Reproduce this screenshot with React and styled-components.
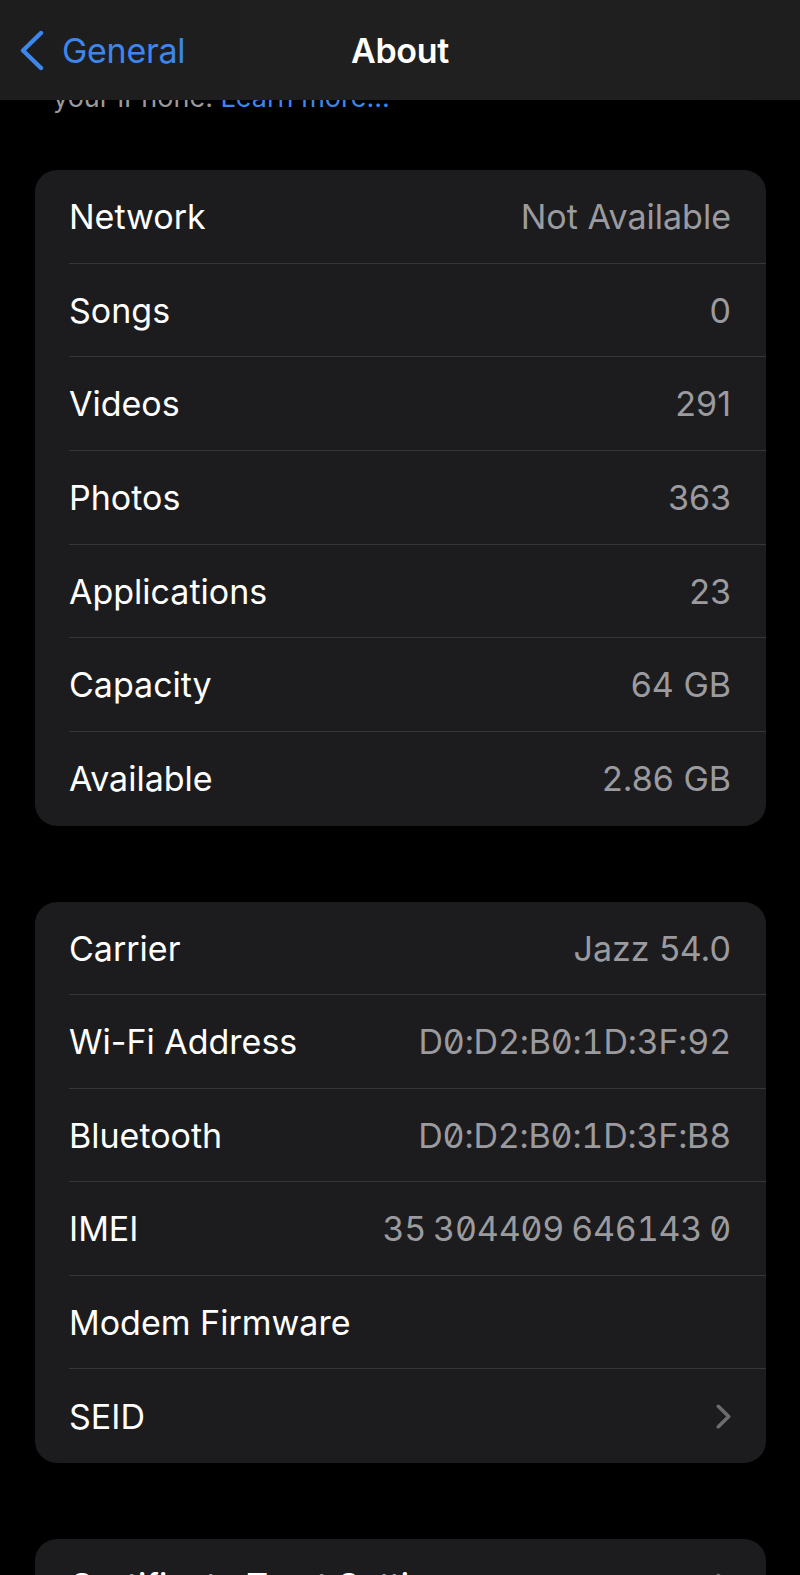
import React from 'react';
import styled, { createGlobalStyle } from 'styled-components';

const GlobalStyle = createGlobalStyle`
  html, body {
    margin: 0;
    padding: 0;
    background: #000;
  }
  body {
    font-family: Inter, "Noto Sans", "Liberation Sans", sans-serif;
    -webkit-font-smoothing: antialiased;
  }
`;

const Page = styled.div`
  position: relative;
  width: 800px;
  height: 1575px;
  overflow: hidden;
  background: #000;
`;

const NavBar = styled.header`
  position: absolute;
  top: 0;
  left: 0;
  right: 0;
  height: 100px;
  z-index: 2;
  display: grid;
  grid-template-columns: 1fr auto 1fr;
  align-items: center;
  background: linear-gradient(90deg, #1d1d1d 0%, #202020 60%, #1e1e1e 100%);
`;

const BackButton = styled.div`
  display: flex;
  align-items: center;
  gap: 18px;
  padding-left: 19px;
  color: #3d86ec;
  font-size: 34px;
  letter-spacing: -0.3px;
`;

const Title = styled.h1`
  margin: 0;
  color: #fff;
  font-size: 34px;
  font-weight: 600;
  letter-spacing: -0.3px;
`;

const Content = styled.main`
  padding: 82px 34px 0 35px;
  display: flex;
  flex-direction: column;
  gap: 76px;
`;

const Note = styled.p`
  margin: 0 0 -20px 18px;
  font-size: 27px;
  line-height: 32px;
  color: #9a9a9e;
`;

const NoteLink = styled.span`
  color: #3d86ec;
`;

const Card = styled.section`
  background: #1c1c1e;
  border-radius: 22px;
  overflow: hidden;
`;

const Row = styled.div`
  padding-left: 34px;
`;

const RowInner = styled.div`
  box-sizing: border-box;
  height: ${p => p.$h}px;
  display: flex;
  align-items: center;
  justify-content: space-between;
  padding-right: 35px;
  border-bottom: ${p => (p.$last ? 'none' : '1.5px solid #363638')};
`;

const Label = styled.span`
  color: #fff;
  font-size: 34px;
  letter-spacing: 0;
`;

const Value = styled.span`
  color: #9b9b9f;
  font-size: 34px;
  letter-spacing: ${p => (p.$mono ? '-0.2px' : '0')};
  word-spacing: ${p => (p.$mono ? '-2px' : 'normal')};
  font-feature-settings: ${p => (p.$mono ? '"zero" 1, "tnum" 1' : 'normal')};
`;

const Chevron = ({ color = '#6c6c70', w = 15, h = 25, sw = 3.6 }) => (
  <svg width={w} height={h} viewBox={`0 0 ${w} ${h}`} fill="none">
    <path
      d={`M${sw / 2 + 0.5} ${sw / 2 + 0.5} L${w - sw / 2 - 0.5} ${h / 2} L${sw / 2 + 0.5} ${h - sw / 2 - 0.5}`}
      stroke={color}
      strokeWidth={sw}
      strokeLinecap="round"
      strokeLinejoin="round"
    />
  </svg>
);

const BackChevron = () => (
  <svg width="25" height="41" viewBox="0 0 25 41" fill="none">
    <path d="M22 3 L4 20.5 L22 38" stroke="#3d86ec" strokeWidth="4.4" strokeLinecap="round" strokeLinejoin="round" />
  </svg>
);

const media = [
  ['Network', 'Not Available'],
  ['Songs', '0'],
  ['Videos', '291'],
  ['Photos', '363'],
  ['Applications', '23'],
  ['Capacity', '64 GB'],
  ['Available', '2.86 GB'],
];

const radio = [
  ['Carrier', 'Jazz 54.0'],
  ['Wi-Fi Address', 'D0:D2:B0:1D:3F:92', true],
  ['Bluetooth', 'D0:D2:B0:1D:3F:B8', true],
  ['IMEI', '35 304409 646143 0', true],
  ['Modem Firmware', ''],
  ['SEID', null],
];

function InfoCard({ rows, h }) {
  return (
    <Card>
      {rows.map(([label, value, mono], i) => (
        <Row key={label}>
          <RowInner $h={h} $last={i === rows.length - 1}>
            <Label>{label}</Label>
            {value === null ? <Chevron /> : <Value $mono={mono}>{value}</Value>}
          </RowInner>
        </Row>
      ))}
    </Card>
  );
}

function App() {
  return (
    <Page>
      <GlobalStyle />
      <NavBar>
        <BackButton>
          <BackChevron />
          General
        </BackButton>
        <Title>About</Title>
        <div />
      </NavBar>

      <Content>
        <Note>
          your iPhone. <NoteLink>Learn more...</NoteLink>
        </Note>
        <InfoCard rows={media} h={93.7} />
        <InfoCard rows={radio} h={93.5} />
        <InfoCard rows={[['Certificate Trust Settings', null]]} h={93.5} />
      </Content>
    </Page>
  );
}

export default App;
